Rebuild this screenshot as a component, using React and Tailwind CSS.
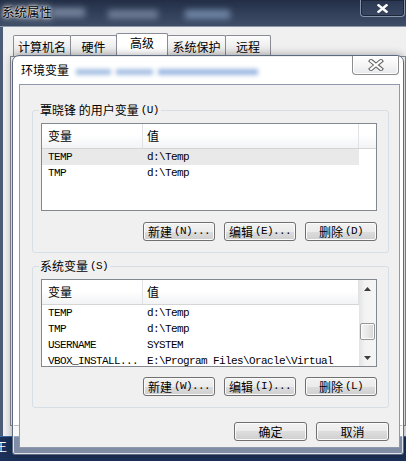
import React from 'react';

const mono = "font-['Liberation_Mono',monospace] text-[11px] tracking-[-0.6px]";

const Button = ({ label, hotkey, dots, width = 'w-[72px]' }) => (
  <button className={`${width} h-[19px] flex items-center justify-center rounded-[3px] border border-[#707070] bg-[linear-gradient(180deg,#f2f2f2_0%,#ebebeb_50%,#dddddd_50%,#cfcfcf_100%)] shadow-[inset_0_0_0_1px_#fbfbfb] text-[12px] leading-[17px] text-black`}>
    <span>{label}</span>
    {hotkey && (
      <span className={`${mono} ml-[2px]`}>
        ({hotkey}){dots ? '...' : ''}
      </span>
    )}
  </button>
);

const Header = ({ filler }) => (
  <div className="flex h-[25px] border-b border-[#d5d5d5] bg-[linear-gradient(180deg,#ffffff_0%,#ffffff_45%,#f2f3f5_100%)] text-[12px] leading-[24px] text-black">
    <div className="w-[101px] pl-[6px] border-r border-[#e0e2e5]">变量</div>
    <div className="w-[216px] pl-[4px] border-r border-[#e0e2e5]">值</div>
    {filler && <div className="flex-1" />}
  </div>
);

const Row = ({ name, value, active }) => (
  <div className={`flex h-[16px] w-[317px] ${mono} leading-[16px] text-black ${active ? 'bg-[#e9e9e9]' : ''}`}>
    <div className="w-[101px] pl-[6px] whitespace-nowrap overflow-hidden">{name}</div>
    <div className="w-[216px] pl-[4px] whitespace-nowrap overflow-hidden">{value}</div>
  </div>
);

const Scrollbar = () => (
  <div className="w-[17px] flex flex-col bg-[linear-gradient(90deg,#e3e3e3_0%,#f3f3f3_35%,#f5f5f5_100%)]">
    <div className="h-[17px] flex items-center justify-center">
      <svg width="7" height="4" viewBox="0 0 7 4">
        <path d="M3.5 0L7 4H0z" fill="#3c3c3c" />
      </svg>
    </div>
    <div className="flex-1 pt-[26px] px-[1px]">
      <div className="h-[17px] rounded-[2px] border border-[#979797] bg-[linear-gradient(90deg,#f4f4f4_0%,#e8e8e8_50%,#d4d4d4_100%)] shadow-[inset_0_0_0_1px_#fbfbfb]" />
    </div>
    <div className="h-[17px] flex items-center justify-center">
      <svg width="7" height="4" viewBox="0 0 7 4">
        <path d="M0 0H7L3.5 4z" fill="#3c3c3c" />
      </svg>
    </div>
  </div>
);

const Group = ({ label, hotkey, children, className }) => (
  <fieldset className={`ml-[12px] w-[357px] rounded-[3px] border border-[#d5dfe5] pl-[6px] pr-[11px] pb-[11px] ${className}`}>
    <legend className="flex items-center h-[14px] pl-[1px] pr-[2px] text-[12px] leading-[14px] text-black">
      <span>{label}</span>
      <span className={`${mono} ml-[2px] leading-[14px]`}>({hotkey})</span>
    </legend>
    {children}
  </fieldset>
);

const tabBase = 'h-[21px] pt-[2px] border border-b-0 border-[#898c95] rounded-t-[2px] bg-[linear-gradient(180deg,#fdfdfd_0%,#efefef_50%,#e4e4e4_100%)] text-[12px] leading-[18px] text-center text-black';

export default function App() {
  return (
    <div className="relative w-[406px] h-[461px] overflow-hidden bg-[#1b3159] font-['Noto_Sans_CJK_SC','Noto_Sans',sans-serif]">
      {/* desktop text peeking out */}
      <div className="absolute left-[-5px] top-[440px] text-[12px] leading-[13px] text-white">王</div>

      {/* 系统属性 window */}
      <div className="absolute left-0 top-0 w-[406px] h-[437px] flex flex-col border-b border-[#3f6aa8]">
        <div className="relative h-[27px] flex items-center pl-[2px] pb-[2px] bg-[linear-gradient(180deg,#222e45_0%,#33415b_55%,#3f4d67_100%)] border-b border-[#8d99ab] overflow-hidden">
          <span className="text-[12.5px] text-black [text-shadow:0_0_4px_#ffffff,0_0_8px_#ffffff,0_0_2px_#ffffff]">系统属性</span>
          <div className="w-[33px] h-[9px] bg-[#76849c] blur-[3px]" />
          <div className="ml-[23px] w-[50px] h-[9px] mt-[4px] bg-[#6e7c95] blur-[3px]" />
          <div className="ml-[27px] w-[45px] h-[9px] mt-[4px] bg-[#6f86a6] blur-[3px]" />
          <div className="absolute right-[1px] top-0 w-[45px] h-[17px] flex items-center justify-center rounded-b-[4px] border border-t-0 border-[#8895aa] bg-[linear-gradient(180deg,#2a3650_0%,#3a4863_100%)] shadow-[inset_0_0_0_1px_#1c2638]">
            <svg width="11" height="9" viewBox="0 0 11 9">
              <path d="M1.5 1.2L9.5 7.8M9.5 1.2L1.5 7.8" stroke="#ffffff" strokeWidth="2.4" strokeLinecap="square" />
            </svg>
          </div>
        </div>
        <div className="flex-1 flex flex-col bg-[#f0f0f0] border-l-[3px] border-[#4c5b76]">
          <div className="flex items-end h-[23px] mt-[6px] pl-[10px]">
            <div className={`${tabBase} w-[58px]`}>计算机名</div>
            <div className={`${tabBase} w-[47px] -ml-px`}>硬件</div>
            <div className="h-[23px] w-[52px] -ml-px border border-b-0 border-[#898c95] rounded-t-[2px] bg-white text-[12px] leading-[18px] text-center text-black">高级</div>
            <div className={`${tabBase} w-[59px] -ml-px`}>系统保护</div>
            <div className={`${tabBase} w-[46px] -ml-px`}>远程</div>
          </div>
          <div className="flex-1 ml-[7px] mb-[10px] border border-[#898c95] bg-white" />
        </div>
      </div>

      {/* 环境变量 dialog */}
      <div className="absolute left-[12px] top-[55px] w-[392px] h-[400px] flex flex-col rounded-t-[7px] rounded-b-[3px] border border-[#5d6b82] bg-white/45 shadow-[inset_0_0_0_1px_rgba(255,255,255,0.75),0_0_8px_rgba(0,0,0,0.35)]">
        <div className="h-[28px] flex items-center pl-[8px]">
          <span className="text-[12px] text-black [text-shadow:0_0_4px_#ffffff]">环境变量</span>
          <div className="ml-[7px] w-[35px] h-[6px] mt-[3px] bg-[#a7c0e4] blur-[2px]" />
          <div className="ml-[5px] w-[37px] h-[6px] mt-[3px] bg-[#a7c0e4] blur-[2px]" />
          <div className="ml-[5px] w-[100px] h-[6px] mt-[3px] bg-[#9cb8e2] blur-[2px]" />
          <div className="absolute right-[4px] top-0 w-[47px] h-[19px] flex items-center justify-center rounded-b-[4px] border border-t-0 border-[#8c8c8c] bg-[linear-gradient(180deg,#ffffff_0%,#f3f3f3_60%,#e6e9ec_100%)] shadow-[inset_0_0_0_1px_#ffffff]">
            <svg width="16" height="12" viewBox="0 0 16 12">
              <path d="M3 2L13 10M13 2L3 10" stroke="#6a6a6a" strokeWidth="4.2" strokeLinecap="square" />
              <path d="M3 2L13 10M13 2L3 10" stroke="#ffffff" strokeWidth="2" strokeLinecap="square" />
            </svg>
          </div>
        </div>

        <div className="ml-[6px] w-[381px] h-[364px] flex flex-col border border-[#8e9aab] bg-[#f0f0f0]">
          <Group label="覃晓锋 的用户变量" hotkey="U" className="mt-[18px]">
            <div className="ml-[2px] mt-[6px] w-[336px] h-[88px] border border-[#828790] bg-white overflow-hidden">
              <Header filler />
              <Row name="TEMP" value={'d:\\Temp'} active />
              <Row name="TMP" value={'d:\\Temp'} />
            </div>
            <div className="mt-[11px] ml-[2px] w-[336px] flex justify-end gap-[9px]">
              <Button label="新建" hotkey="N" dots />
              <Button label="编辑" hotkey="E" dots />
              <Button label="删除" hotkey="D" />
            </div>
          </Group>

          <Group label="系统变量" hotkey="S" className="mt-[6px]">
            <div className="ml-[2px] mt-[6px] w-[336px] h-[88px] flex border border-[#828790] bg-white overflow-hidden">
              <div className="flex-1 overflow-hidden">
                <Header />
                <Row name="TEMP" value={'d:\\Temp'} />
                <Row name="TMP" value={'d:\\Temp'} />
                <Row name="USERNAME" value="SYSTEM" />
                <Row name="VBOX_INSTALL..." value={'E:\\Program Files\\Oracle\\Virtual'} />
              </div>
              <Scrollbar />
            </div>
            <div className="mt-[10px] ml-[2px] w-[336px] flex justify-end gap-[9px]">
              <Button label="新建" hotkey="W" dots />
              <Button label="编辑" hotkey="I" dots />
              <Button label="删除" hotkey="L" />
            </div>
          </Group>

          <div className="mt-[14px] mr-[10px] flex justify-end gap-[9px]">
            <Button label="确定" width="w-[73px]" />
            <Button label="取消" width="w-[73px]" />
          </div>
        </div>
      </div>
    </div>
  );
}
